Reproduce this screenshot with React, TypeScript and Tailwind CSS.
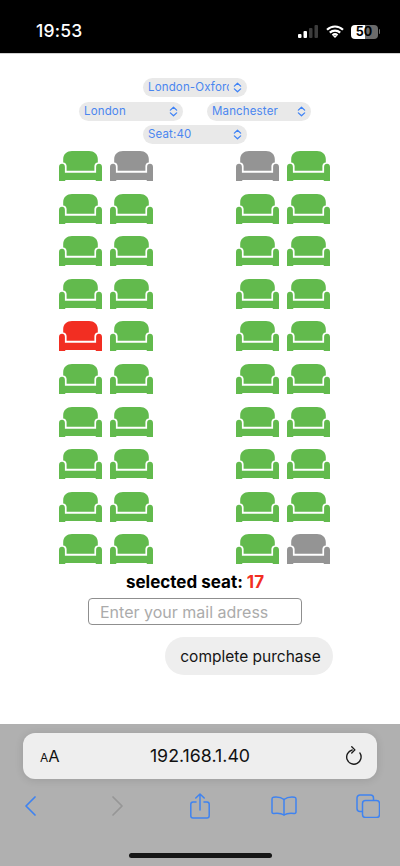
import React from "react";

const sans = "font-['Inter','Liberation_Sans',sans-serif]";

function Seat({ color }: { color: string }) {
  return (
    <svg viewBox="0 0 43 30" className={`w-[43px] h-[30px] shrink-0 ${color}`} fill="currentColor">
      <path d="M4.200 8C4.200 3 8 0 13 0H30C35 0 38.800 3 38.800 8V11.500C36.800 11.700 35.400 13 35.400 15V19.700H7.600V15C7.600 13 6.200 11.700 4.200 11.500Z" />
      <path d="M0 16C0 14 1.300 12.800 3 12.800S5.900 14 5.900 16V21.800H37.100V16C37.100 14 38.300 12.800 40 12.800S43 14 43 16V30H37L36.500 29H6.500L6 30H0Z" />
    </svg>
  );
}

function Updown() {
  return (
    <svg viewBox="0 0 10 12" className="w-[9px] h-[11px] shrink-0 ml-auto" fill="none" stroke="#3d82f6" strokeWidth="1.400" strokeLinecap="round" strokeLinejoin="round">
      <path d="M1.500 4.500L5 1.300L8.500 4.500M1.500 7.500L5 10.700L8.500 7.500" />
    </svg>
  );
}

function Select({ label }: { label: string }) {
  return (
    <div className="w-[104px] h-[19px] rounded-full bg-[#e9e9e9] flex items-center pl-[5px] pr-[5px] text-[11.500px] text-[#4a86f0] tracking-[0.15px]">
      <span className="w-[81px] h-[19px] leading-[19px] overflow-hidden whitespace-nowrap">{label}</span>
      <Updown />
    </div>
  );
}

const G = "text-[#62ba4d]";
const X = "text-[#949494]";
const R = "text-[#f22e22]";

const rows: string[][] = [
  [G, X, X, G],
  [G, G, G, G],
  [G, G, G, G],
  [G, G, G, G],
  [R, G, G, G],
  [G, G, G, G],
  [G, G, G, G],
  [G, G, G, G],
  [G, G, G, G],
  [G, G, G, X],
];

export default function App() {
  return (
    <div className={`w-[400px] h-[866px] flex flex-col bg-white overflow-hidden ${sans}`}>
      {/* status bar */}
      <div className="h-[54px] shrink-0 bg-black border-b border-[#d0d0d0] flex items-center pl-[36px] pr-[20px] pt-[10px] text-white">
        <span className="text-[17.500px] font-medium tracking-[0.2px]">19:53</span>
        <div className="ml-auto flex items-center">
          <svg viewBox="0 0 21 13" className="w-[21px] h-[13px]">
            <rect x="0" y="9" width="3.500" height="4" rx="1" fill="#fff" />
            <rect x="5.500" y="6" width="3.500" height="7" rx="1" fill="#fff" />
            <rect x="11" y="3" width="3.500" height="10" rx="1" fill="#3c3c3c" />
            <rect x="16.500" y="0" width="3.500" height="13" rx="1" fill="#3c3c3c" />
          </svg>
          <svg viewBox="0 0 18 13" className="w-[18px] h-[13px] ml-[7px]" fill="none" stroke="#fff" strokeWidth="2.200">
            <path d="M1 4.700C5.500 .4 12.500 .4 17 4.700" />
            <path d="M3.800 7.600C6.800 4.900 11.200 4.900 14.200 7.600" />
            <path d="M6.500 10.300C8 9 10 9 11.500 10.300" />
            <path d="M9 13L7.200 11.200C8.200 10.300 9.800 10.300 10.800 11.200Z" fill="#fff" stroke="none" />
          </svg>
          <div className="relative ml-[7px] w-[27px] h-[14px] rounded-[4px] bg-[linear-gradient(90deg,#ffffff_52%,#6b6b6b_52%)] flex items-center justify-center text-[12.500px] leading-[14px] font-bold text-black">
            50
          </div>
          <div className="w-[1.500px] h-[5px] ml-[1px] bg-[#6b6b6b] rounded-r" />
        </div>
      </div>

      {/* page */}
      <div className="flex-1 flex flex-col items-center">
        <div className="mt-[24px] ml-[-10px] flex flex-col items-center gap-[4.500px]">
          <Select label="London-Oxford" />
          <div className="flex gap-[24px]">
            <Select label="London" />
            <Select label="Manchester" />
          </div>
          <Select label="Seat:40" />
        </div>

        <div className="mt-[7px] ml-[-11px] flex flex-col gap-[12.600px]">
          {rows.map((r, i) => (
            <div key={i} className="flex">
              <div className="flex gap-[8px]">
                <Seat color={r[0]} />
                <Seat color={r[1]} />
              </div>
              <div className="flex gap-[8px] ml-[83px]">
                <Seat color={r[2]} />
                <Seat color={r[3]} />
              </div>
            </div>
          ))}
        </div>

        <div className="mt-[8px] ml-[-10px] h-[20px] leading-[20px] text-[17px] font-bold text-black">
          selected seat: <span className="text-[#f22e22]">17</span>
        </div>

        <input
          placeholder="Enter your mail adress"
          readOnly
          className="mt-[6px] ml-[-10px] w-[214px] h-[27px] rounded-[4px] border border-[#8f8f8f] px-[11px] text-[16px] text-black placeholder:text-[#ababab] outline-none"
        />

        <div className="mt-[12px] self-end mr-[67px] w-[168px] h-[38px] pl-[3px] rounded-full bg-[#eeeeee] flex items-center justify-center text-[15.500px] text-[#151515]">
          complete purchase
        </div>
      </div>

      {/* browser bar */}
      <div className="h-[142px] shrink-0 bg-[#b0b0b0] flex flex-col">
        <div className="mt-[9px] mx-[23px] h-[46px] rounded-[12px] bg-[#eeeeee] shadow-[0_1px_8px_rgba(0,0,0,0.12)] flex items-center pl-[17px] pr-[14px] text-[#111]">
          <span className="w-[24px] flex items-baseline">
            <span className="text-[12px] leading-none">A</span>
            <span className="text-[16.500px] leading-none">A</span>
          </span>
          <span className="flex-1 text-center text-[17.800px] pr-[9px]">192.168.1.40</span>
          <svg viewBox="0 0 20 22" className="w-[18px] h-[20px]" fill="none" stroke="#1a1a1a" strokeWidth="1.500" strokeLinecap="round" strokeLinejoin="round">
            <path d="M8 4.300A8 8 0 1 0 16.500 7.600" />
            <path d="M7.500 .7L11 4.200L7.500 7.700" />
          </svg>
        </div>

        <div className="mt-[13px] h-[28px] flex items-center pl-[25px]">
          <svg viewBox="0 0 11 20" className="w-[11px] h-[20px]" fill="none" stroke="#3f83f0" strokeWidth="1.700" strokeLinecap="round" strokeLinejoin="round">
            <path d="M10 1L1 10L10 19" />
          </svg>
          <svg viewBox="0 0 11 20" className="w-[11px] h-[20px] ml-[76px]" fill="none" stroke="#969696" strokeWidth="1.700" strokeLinecap="round" strokeLinejoin="round">
            <path d="M1 1L10 10L1 19" />
          </svg>
          <svg viewBox="0 0 20 26" className="w-[20px] h-[26px] ml-[67px]" fill="none" stroke="#3f83f0" strokeWidth="1.500" strokeLinecap="round" strokeLinejoin="round">
            <path d="M6 9H3A2.300 2.300 0 0 0 .8 11.300V22.700A2.300 2.300 0 0 0 3 25H17A2.300 2.300 0 0 0 19.200 22.700V11.300A2.300 2.300 0 0 0 17 9H14" />
            <path d="M10 17V1M5.800 5L10 1L14.200 5" />
          </svg>
          <svg viewBox="0 0 26 20" className="w-[26px] h-[20px] ml-[61px]" fill="none" stroke="#3f83f0" strokeWidth="1.500" strokeLinecap="round" strokeLinejoin="round">
            <path d="M13 3.500C10.500 1.500 6 .8 2.500 1.200C1.500 1.300 1 2 1 3V16C1 17 1.700 17.500 2.700 17.400C6 17 10.500 17.200 13 19C15.500 17.200 20 17 23.300 17.400C24.300 17.500 25 17 25 16V3C25 2 24.500 1.300 23.500 1.200C20 .8 15.500 1.500 13 3.500Z" />
            <path d="M13 3.500V19" />
          </svg>
          <svg viewBox="0 0 24 24" className="w-[24px] h-[24px] ml-[59px]" fill="none" stroke="#3f83f0" strokeWidth="1.500" strokeLinejoin="round">
            <rect x="6.500" y="6.500" width="17" height="17" rx="3" />
            <path d="M6.500 17.500H4A3 3 0 0 1 1 14.500V4A3 3 0 0 1 4 1H14.500A3 3 0 0 1 17.500 4V6.500" />
          </svg>
        </div>

        <div className="mt-[33px] mx-auto w-[143px] h-[5px] rounded-full bg-[#161616]" />
      </div>
    </div>
  );
}
